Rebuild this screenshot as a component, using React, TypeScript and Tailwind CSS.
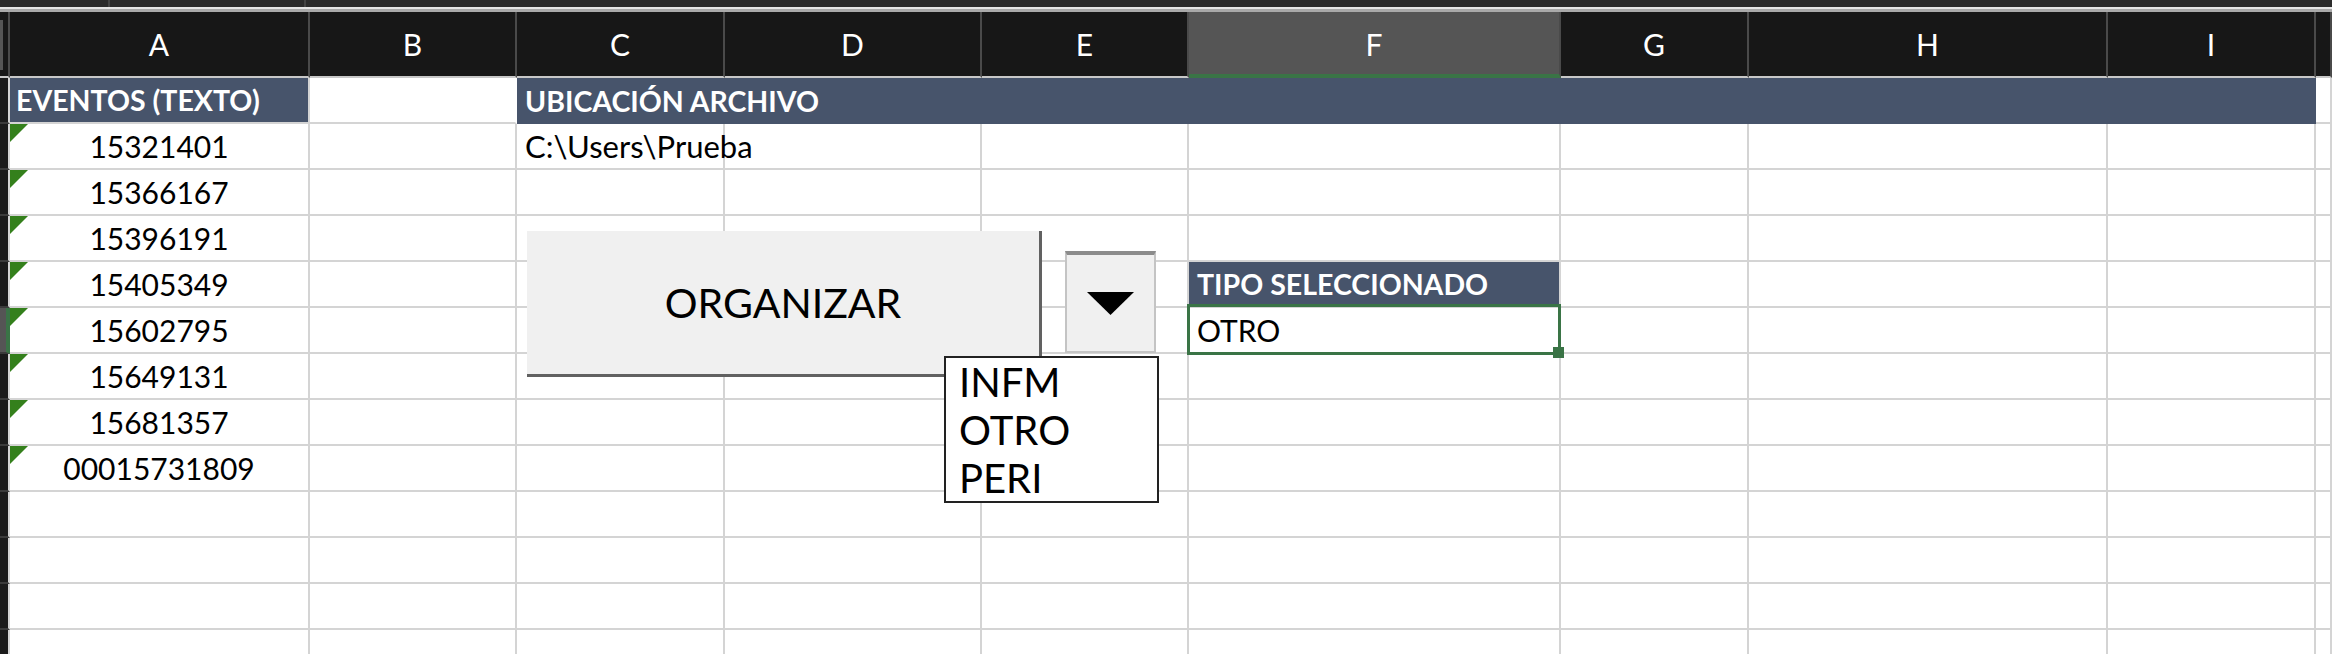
import { ReactNode } from "react";

const font = { fontFamily: "Lato, 'Open Sans', sans-serif" };

const columns = ["A", "B", "C", "D", "E", "F", "G", "H", "I", ""];
const grid = "grid grid-cols-[10px_300px_207px_208px_257px_207px_372px_188px_359px_208px_1fr]";

const events = ["15321401", "15366167", "15396191", "15405349", "15602795", "15649131", "15681357", "00015731809"];

const Cell = ({ children, className = "" }: { children?: ReactNode; className?: string }) => (
  <div className={`relative h-[46px] border-r-2 border-b-2 border-[#d4d4d4] flex items-center ${className}`}>
    {children}
  </div>
);

const Strip = ({ active = false }: { active?: boolean }) => (
  <div className={`h-[46px] border-b-2 border-[#3a3a3a] ${active ? "bg-[#555555] border-r-[4px] border-r-[#3a7446]" : "bg-[#1a1a1a] border-r-2 border-r-[#d4d4d4]"}`} />
);

const Flag = () => (
  <svg className="absolute left-0 top-0" width="18" height="18" viewBox="0 0 18 18">
    <polygon points="0,0 18,0 0,18" fill="#34801c" />
  </svg>
);

const Row = ({ index }: { index: number }) => {
  const ev = events[index - 2];
  return (
    <div className={grid}>
      <Strip active={index === 6} />
      <Cell className="justify-center">
        {ev && <Flag />}
        {ev}
      </Cell>
      <Cell />
      <Cell className="pl-[8px] text-[31px]">{index === 2 ? "C:\\Users\\Prueba" : null}</Cell>
      <Cell />
      <Cell />
      {index === 5 ? (
        <Cell className="bg-[#47546b] text-white font-bold text-[28.5px] pl-[8px]">TIPO SELECCIONADO</Cell>
      ) : index === 6 ? (
        <Cell className="pl-[8px]">
          OTRO
          <div className="absolute z-10 -left-[2px] -top-[4px] w-[374px] h-[51px] border-[3px] border-[#3a7446]" />
          <div className="absolute z-10 left-[364px] top-[39px] w-[11px] h-[11px] bg-[#3a7446]" />
        </Cell>
      ) : (
        <Cell />
      )}
      <Cell />
      <Cell />
      <Cell />
      <Cell />
    </div>
  );
};

export default function App() {
  return (
    <div className="relative w-[2332px] h-[654px] overflow-hidden bg-white text-black text-[30px]" style={font}>
      {/* top chrome */}
      <div className="h-[7px] bg-[#2b2b2b] flex">
        <div className="w-[110px] border-r-2 border-[#444]" />
        <div className="w-[196px] border-r-2 border-[#444]" />
      </div>
      <div className="h-[2px] bg-[#e6e6e6]" />
      <div className="h-[3px] bg-[#a9a9a9]" />

      {/* column headers */}
      <div className={`${grid} h-[66px]`}>
        <div className="bg-[#171717] border-r-2 border-[#4a4a4a] border-b-2 border-b-[#c8c8c8] flex items-start pt-[8px]">
          <div className="w-[3px] h-[50px] bg-[#555]" />
        </div>
        {columns.map((c) => (
          <div
            key={c || "J"}
            className={`flex items-center justify-center text-white text-[30px] border-r-2 border-[#4a4a4a] ${
              c === "F" ? "bg-[#555555] border-b-4 border-b-[#3a7446] pt-[2px]" : "bg-[#171717] border-b-2 border-b-[#c8c8c8]"
            }`}
          >
            {c}
          </div>
        ))}
      </div>

      {/* row 1 */}
      <div className={grid}>
        <Strip />
        <Cell className="bg-[#47546b] border-[#47546b] text-white font-bold text-[28.5px] pl-[6px]">EVENTOS (TEXTO)</Cell>
        <Cell className="border-r-white" />
        <div className="col-span-7 h-[46px] bg-[#47546b] text-white font-bold text-[28.5px] flex items-center pl-[8px]">
          UBICACIÓN ARCHIVO
        </div>
        <Cell />
      </div>

      {Array.from({ length: 12 }, (_, i) => (
        <Row key={i} index={i + 2} />
      ))}

      {/* ORGANIZAR button */}
      <div className="absolute z-20 left-[527px] top-[231px] w-[515px] h-[146px] bg-[#f0f0f0] border-r-[3px] border-b-[3px] border-[#616161] flex items-center justify-center text-[41px]">
        ORGANIZAR
      </div>

      {/* dropdown arrow */}
      <div className="absolute z-20 left-[1065px] top-[251px] w-[91px] h-[102px] bg-[#f0f0f0] border-2 border-[#c4c4c4] border-t-4 border-t-[#8c8c8c] flex items-center justify-center">
        <svg width="47" height="23" viewBox="0 0 47 23">
          <polygon points="0,0 47,0 23.5,23" fill="#000" />
        </svg>
      </div>

      {/* dropdown list */}
      <div className="absolute z-30 left-[944px] top-[356px] w-[215px] h-[147px] bg-white border-2 border-[#222] pl-[13px] text-[40px] leading-[48px]">
        <div>INFM</div>
        <div>OTRO</div>
        <div>PERI</div>
      </div>
    </div>
  );
}
